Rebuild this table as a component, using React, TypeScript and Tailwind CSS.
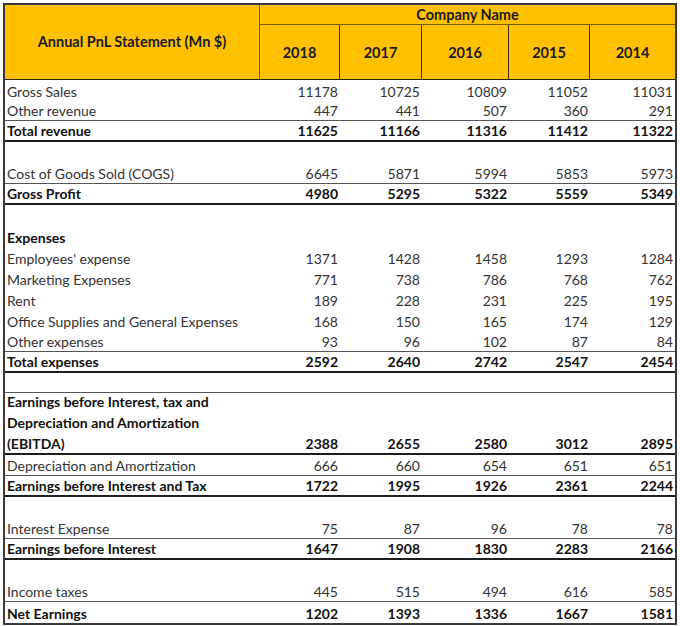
type Row = {
  label: string[];
  vals?: number[];
  bold?: boolean;
  h: string;
  line?: "thin" | "thick";
};

const years = [2018, 2017, 2016, 2015, 2014];
const colW = ["w-[80px]", "w-[82px]", "w-[87px]", "w-[81px]", "w-[85px]"];

const rows: Row[] = [
  { label: ["Gross Sales"], vals: [11178, 10725, 10809, 11052, 11031], h: "h-[21px]" },
  { label: ["Other revenue"], vals: [447, 441, 507, 360, 291], h: "h-[20px]", line: "thin" },
  { label: ["Total revenue"], vals: [11625, 11166, 11316, 11412, 11322], bold: true, h: "h-[21px]", line: "thick" },
  { label: [""], h: "h-[21px]" },
  { label: ["Cost of Goods Sold (COGS)"], vals: [6645, 5871, 5994, 5853, 5973], h: "h-[21px]", line: "thin" },
  { label: ["Gross Profit"], vals: [4980, 5295, 5322, 5559, 5349], bold: true, h: "h-[21px]", line: "thick" },
  { label: [""], h: "h-[21px]" },
  { label: ["Expenses"], bold: true, h: "h-[21px]" },
  { label: ["Employees' expense"], vals: [1371, 1428, 1458, 1293, 1284], h: "h-[21px]" },
  { label: ["Marketing Expenses"], vals: [771, 738, 786, 768, 762], h: "h-[21px]" },
  { label: ["Rent"], vals: [189, 228, 231, 225, 195], h: "h-[21px]" },
  { label: ["Office Supplies and General Expenses"], vals: [168, 150, 165, 174, 129], h: "h-[21px]" },
  { label: ["Other expenses"], vals: [93, 96, 102, 87, 84], h: "h-[21px]", line: "thin" },
  { label: ["Total expenses"], vals: [2592, 2640, 2742, 2547, 2454], bold: true, h: "h-[21px]", line: "thick" },
  { label: [""], h: "h-[20px]", line: "thin" },
  {
    label: ["Earnings before Interest, tax and", "Depreciation and Amortization", "(EBITDA)"],
    vals: [2388, 2655, 2580, 3012, 2895],
    bold: true,
    h: "h-[62px]",
    line: "thick",
  },
  { label: ["Depreciation and Amortization"], vals: [666, 660, 654, 651, 651], h: "h-[21px]", line: "thin" },
  { label: ["Earnings before Interest and Tax"], vals: [1722, 1995, 1926, 2361, 2244], bold: true, h: "h-[21px]", line: "thick" },
  { label: [""], h: "h-[21px]" },
  { label: ["Interest Expense"], vals: [75, 87, 96, 78, 78], h: "h-[21px]", line: "thin" },
  { label: ["Earnings before Interest"], vals: [1647, 1908, 1830, 2283, 2166], bold: true, h: "h-[21px]", line: "thick" },
  { label: [""], h: "h-[21px]" },
  { label: ["Income taxes"], vals: [445, 515, 494, 616, 585], h: "h-[21px]", line: "thin" },
  { label: ["Net Earnings"], vals: [1202, 1393, 1336, 1667, 1581], bold: true, h: "h-[21px]" },
];

const StatementRow = ({ row }: { row: Row }) => {
  const lineCls =
    row.line === "thick"
      ? "border-b-2 border-[#1e1e1e]"
      : row.line === "thin"
        ? "border-b border-[#555555]"
        : "";
  return (
    <div
      className={`flex items-end ${row.h} ${lineCls} ${
        row.bold ? "font-bold text-[#111111]" : "text-[#333333]"
      }`}
    >
      <div className="w-[255px] pl-[2px] leading-[21px] whitespace-nowrap translate-y-px">
        {row.label.map((l, i) => (
          <div key={i}>{l}</div>
        ))}
      </div>
      {row.vals &&
        row.vals.map((v, i) => (
          <div key={i} className={`${colW[i]} pr-[2px] text-right leading-[21px] translate-y-px`}>
            {v}
          </div>
        ))}
    </div>
  );
};

export default function App() {
  return (
    <div className="w-[680px] h-[626px] bg-white p-[3px]" style={{ fontFamily: "Lato, 'Open Sans', sans-serif" }}>
      <div className="w-[674px] border-2 border-[#3a3a3a] text-[14px]">
        {/* header */}
        <div className="flex h-[75px] bg-[#ffc000] border-b border-[#2b2200] font-bold text-[#1a1a1a] text-[14.5px]">
          <div className="w-[255px] border-r border-[#7a5c00] flex items-center justify-center">
            Annual PnL Statement (Mn $)
          </div>
          <div className="flex flex-col flex-1">
            <div className="h-[19px] border-b border-[#7a5c00] flex items-center justify-center translate-y-px">
              Company Name
            </div>
            <div className="flex flex-1">
              {years.map((y, i) => (
                <div
                  key={y}
                  className={`${colW[i]} flex items-center justify-center pt-[2px] ${
                    i < years.length - 1 ? "border-r border-[#3d2e00]" : ""
                  }`}
                >
                  {y}
                </div>
              ))}
            </div>
          </div>
        </div>
        {rows.map((r, i) => (
          <StatementRow key={i} row={r} />
        ))}
      </div>
    </div>
  );
}
